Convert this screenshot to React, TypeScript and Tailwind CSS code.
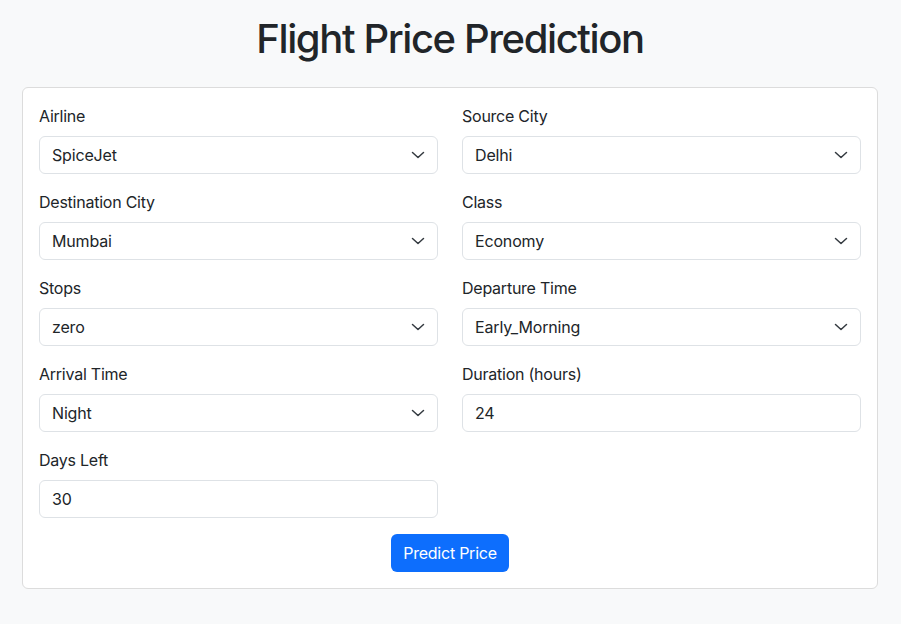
import React, { useState } from 'react';

const font = { fontFamily: 'Inter, "Noto Sans", "Liberation Sans", sans-serif' };

type Field =
    | { kind: 'select'; label: string; value: string; options: string[] }
    | { kind: 'input'; label: string; value: string };

const fields: Field[] = [
    { kind: 'select', label: 'Airline', value: 'SpiceJet', options: ['SpiceJet', 'AirAsia', 'Vistara', 'GO_FIRST', 'Indigo', 'Air_India'] },
    { kind: 'select', label: 'Source City', value: 'Delhi', options: ['Delhi', 'Mumbai', 'Bangalore', 'Kolkata', 'Hyderabad', 'Chennai'] },
    { kind: 'select', label: 'Destination City', value: 'Mumbai', options: ['Mumbai', 'Delhi', 'Bangalore', 'Kolkata', 'Hyderabad', 'Chennai'] },
    { kind: 'select', label: 'Class', value: 'Economy', options: ['Economy', 'Business'] },
    { kind: 'select', label: 'Stops', value: 'zero', options: ['zero', 'one', 'two_or_more'] },
    { kind: 'select', label: 'Departure Time', value: 'Early_Morning', options: ['Early_Morning', 'Morning', 'Afternoon', 'Evening', 'Night', 'Late_Night'] },
    { kind: 'select', label: 'Arrival Time', value: 'Night', options: ['Night', 'Early_Morning', 'Morning', 'Afternoon', 'Evening', 'Late_Night'] },
    { kind: 'input', label: 'Duration (hours)', value: '24' },
    { kind: 'input', label: 'Days Left', value: '30' },
];

// bootstrap-style select caret
const Chevron = () => (
    <svg
        className="pointer-events-none absolute right-[13px] top-1/2 -translate-y-1/2"
        width="14"
        height="8"
        viewBox="0 0 14 8"
        fill="none"
        stroke="#343a40"
        strokeWidth="1.5"
        strokeLinecap="round"
        strokeLinejoin="round"
    >
        <path d="M1.5 1.5 7 6.5l5.5-5" />
    </svg>
);

const FormField: React.FC<{ field: Field }> = ({ field }) => {
    const [value, setValue] = useState(field.value);
    const base =
        'block w-full h-[38px] rounded-md border border-[#dee2e6] bg-white px-3 text-base tracking-[-0.01em] text-[#212529] outline-none';

    return (
        <div className="mb-4">
            <label className="mb-2 block text-base leading-6 tracking-[-0.015em] text-[#212529]">{field.label}</label>
            {field.kind === 'select' ? (
                <div className="relative">
                    <select
                        value={value}
                        onChange={(e) => setValue(e.target.value)}
                        className={base + ' appearance-none pr-9'}
                        style={font}
                    >
                        {field.options.map((o) => (
                            <option key={o} value={o}>
                                {o}
                            </option>
                        ))}
                    </select>
                    <Chevron />
                </div>
            ) : (
                <input
                    type="number"
                    value={value}
                    onChange={(e) => setValue(e.target.value)}
                    className={base + ' [appearance:textfield]'}
                    style={font}
                />
            )}
        </div>
    );
};

export default function App() {
    return (
        <div className="min-h-[624px] bg-[#f8f9fa] pl-[22px] pr-[23px] pt-[15px]" style={font}>
            <h1 className="mb-6 text-center text-[40px] font-medium leading-[48px] tracking-[-0.035em] text-[#212529]">
                Flight Price Prediction
            </h1>

            {/* Form card */}
            <div className="rounded-md border border-[#dcdcdc] bg-white p-4">
                <div className="grid grid-cols-2 gap-x-6">
                    {fields.map((f) => (
                        <FormField key={f.label} field={f} />
                    ))}
                </div>
                <div className="flex justify-center">
                    <button className="h-[38px] rounded-md bg-[#0d6efd] px-3 text-base tracking-[-0.015em] text-white hover:bg-[#0b5ed7]">
                        Predict Price
                    </button>
                </div>
            </div>
        </div>
    );
}
